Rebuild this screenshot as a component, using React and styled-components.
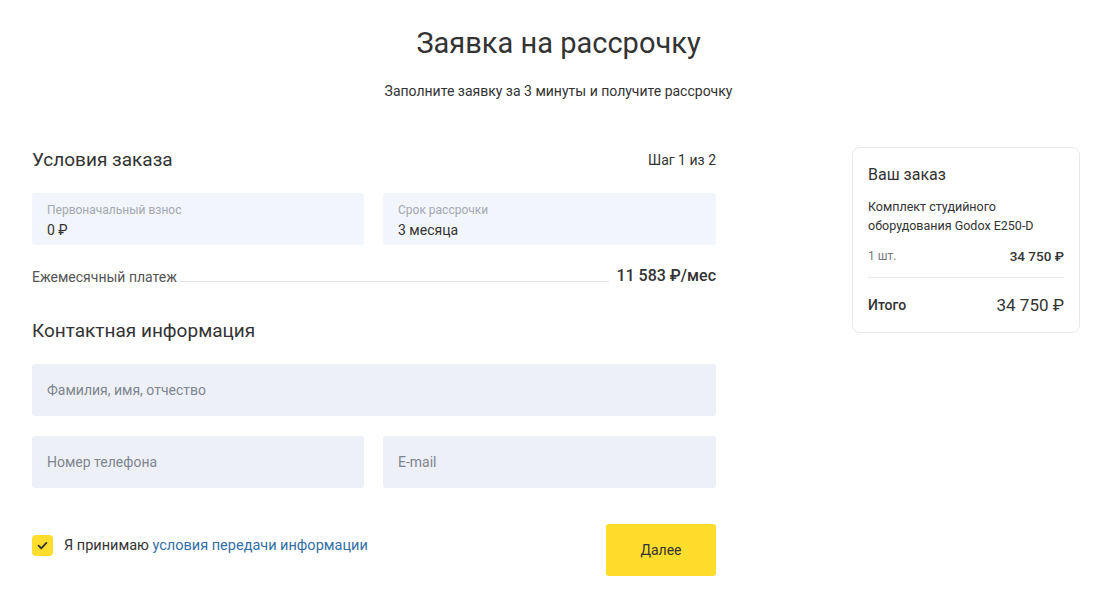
import React, {useState} from "react";
import styled, {createGlobalStyle} from "styled-components";

const GlobalStyle = createGlobalStyle`
  body {
    margin: 0;
    background: #fff;
    font-family: Roboto, "Liberation Sans", sans-serif;
    color: #333;
  }
`

export default function App() {
   const [agreed, setAgreed] = useState(true)

   return (
      <>
         <GlobalStyle/>
         <StyledPage>
            <StyledIntro>
               <h1>Заявка на рассрочку</h1>
               <p>Заполните заявку за 3 минуты и получите рассрочку</p>
            </StyledIntro>

            <StyledColumns>
               <StyledForm onSubmit={e => e.preventDefault()}>
                  <SectionHead>
                     <h2>Условия заказа</h2>
                     <span>Шаг 1 из 2</span>
                  </SectionHead>

                  <FieldRow>
                     <Field>
                        <label>Первоначальный взнос</label>
                        <span>0 ₽</span>
                     </Field>
                     <Field>
                        <label>Срок рассрочки</label>
                        <span>3 месяца</span>
                     </Field>
                  </FieldRow>

                  <Payment>
                     <span>Ежемесячный платеж</span>
                     <i/>
                     <b>11 583 ₽/мес</b>
                  </Payment>

                  <SectionHead $contact>
                     <h2>Контактная информация</h2>
                  </SectionHead>

                  <Input placeholder="Фамилия, имя, отчество"/>
                  <FieldRow $top={20}>
                     <Input placeholder="Номер телефона"/>
                     <Input placeholder="E-mail"/>
                  </FieldRow>

                  <FormFooter>
                     <Agree onClick={() => setAgreed(!agreed)}>
                        <Checkbox $checked={agreed}>
                           {agreed &&
                              <svg width="13" height="13" viewBox="0 0 12 12" fill="none">
                                 <path d="M2.4 6.2l2.4 2.4 4.8-5" stroke="#333" strokeWidth="1.7"
                                       strokeLinecap="round" strokeLinejoin="round"/>
                              </svg>}
                        </Checkbox>
                        <span>Я принимаю <a href="#terms">условия передачи информации</a></span>
                     </Agree>
                     <NextButton type="submit">Далее</NextButton>
                  </FormFooter>
               </StyledForm>

               <OrderCard>
                  <h3>Ваш заказ</h3>
                  <p>Комплект студийного оборудования Godox E250-D</p>
                  <OrderLine>
                     <small>1 шт.</small>
                     <b>34 750 ₽</b>
                  </OrderLine>
                  <OrderTotal>
                     <span>Итого</span>
                     <strong>34 750 ₽</strong>
                  </OrderTotal>
               </OrderCard>
            </StyledColumns>
         </StyledPage>
      </>
   )
}

const StyledPage = styled.div`
  padding: 24px 27px 28px 32px;
`

const StyledIntro = styled.header`
  text-align: center;
  padding-left: 5px;

  h1 {
    margin: 0;
    font-size: 29px;
    font-weight: 400;
    line-height: 38px;
    color: #333;
  }

  p {
    margin: 19px 0 0;
    font-size: 14px;
    line-height: 20px;
    color: #333;
  }
`

const StyledColumns = styled.div`
  display: grid;
  grid-template-columns: 684px 228px;
  justify-content: space-between;
  align-items: start;
  margin-top: 46px;
`

const StyledForm = styled.form`
  display: flex;
  flex-direction: column;
`

const SectionHead = styled.div`
  display: flex;
  justify-content: space-between;
  align-items: center;
  margin: ${({$contact}) => $contact ? "33px 0 20px" : "0 0 20px"};

  h2 {
    margin: 0;
    font-size: 19px;
    font-weight: 400;
    line-height: 26px;
    color: #333;
  }

  span {
    font-size: 14px;
    color: #333;
  }
`

const FieldRow = styled.div`
  display: grid;
  grid-template-columns: 332px 333px;
  justify-content: space-between;
  margin-top: ${({$top}) => $top || 0}px;
`

const Field = styled.div`
  display: flex;
  flex-direction: column;
  justify-content: center;
  gap: 5px;
  height: 52px;
  padding: 2px 15px 0;
  box-sizing: border-box;
  background: #f2f5fb;
  border-radius: 3px;

  label {
    font-size: 12px;
    line-height: 14px;
    color: #a3a8b2;
  }

  span {
    font-size: 14px;
    line-height: 16px;
    color: #333;
  }
`

const Input = styled.input`
  height: 52px;
  width: 100%;
  box-sizing: border-box;
  padding: 0 15px;
  border: none;
  border-radius: 3px;
  background: #edf1f7;
  font-family: inherit;
  font-size: 14px;
  color: #333;
  outline: none;

  &::placeholder {
    color: #7f8590;
  }
`

const Payment = styled.div`
  display: flex;
  align-items: flex-end;
  gap: 3px;
  margin-top: 21px;

  span {
    font-size: 14px;
    color: #555;
  }

  i {
    flex: 1;
    border-bottom: 1px solid #e3e5e9;
    margin-bottom: 3px;
  }

  b {
    font-size: 16px;
    font-weight: 500;
    color: #333;
    margin-left: 4px;
  }
`

const FormFooter = styled.div`
  display: flex;
  justify-content: space-between;
  align-items: center;
  margin-top: 36px;
`

const Agree = styled.label`
  display: flex;
  align-items: center;
  gap: 11px;
  font-size: 14.5px;
  color: #333;
  cursor: pointer;
  margin-top: -10px;

  a {
    color: #336fa6;
    text-decoration: none;
  }
`

const Checkbox = styled.span`
  display: flex;
  align-items: center;
  justify-content: center;
  width: 21px;
  height: 21px;
  border-radius: 4px;
  background: ${({$checked}) => $checked ? "#ffdd2d" : "#eef1f6"};
`

const NextButton = styled.button`
  width: 110px;
  height: 52px;
  border: none;
  border-radius: 3px;
  background: #ffdd2d;
  font-family: inherit;
  font-size: 14px;
  color: #333;
  cursor: pointer;
`

const OrderCard = styled.aside`
  border: 1px solid #e6e8ec;
  border-radius: 8px;
  padding: 16px 15px 17px;

  h3 {
    margin: 0;
    font-size: 16px;
    font-weight: 400;
    line-height: 22px;
    color: #333;
  }

  p {
    margin: 11px 0 0;
    font-size: 12.5px;
    line-height: 19px;
    color: #333;
  }
`

const OrderLine = styled.div`
  display: flex;
  justify-content: space-between;
  align-items: center;
  padding: 13px 0 13px;
  border-bottom: 1px solid #e6e8ec;

  small {
    font-size: 12px;
    color: #777;
  }

  b {
    font-size: 13.5px;
    font-weight: 500;
    color: #333;
  }
`

const OrderTotal = styled.div`
  display: flex;
  justify-content: space-between;
  align-items: center;
  padding-top: 17px;

  span {
    font-size: 14px;
    font-weight: 500;
    color: #333;
  }

  strong {
    font-size: 17px;
    font-weight: 400;
    color: #333;
  }
`
